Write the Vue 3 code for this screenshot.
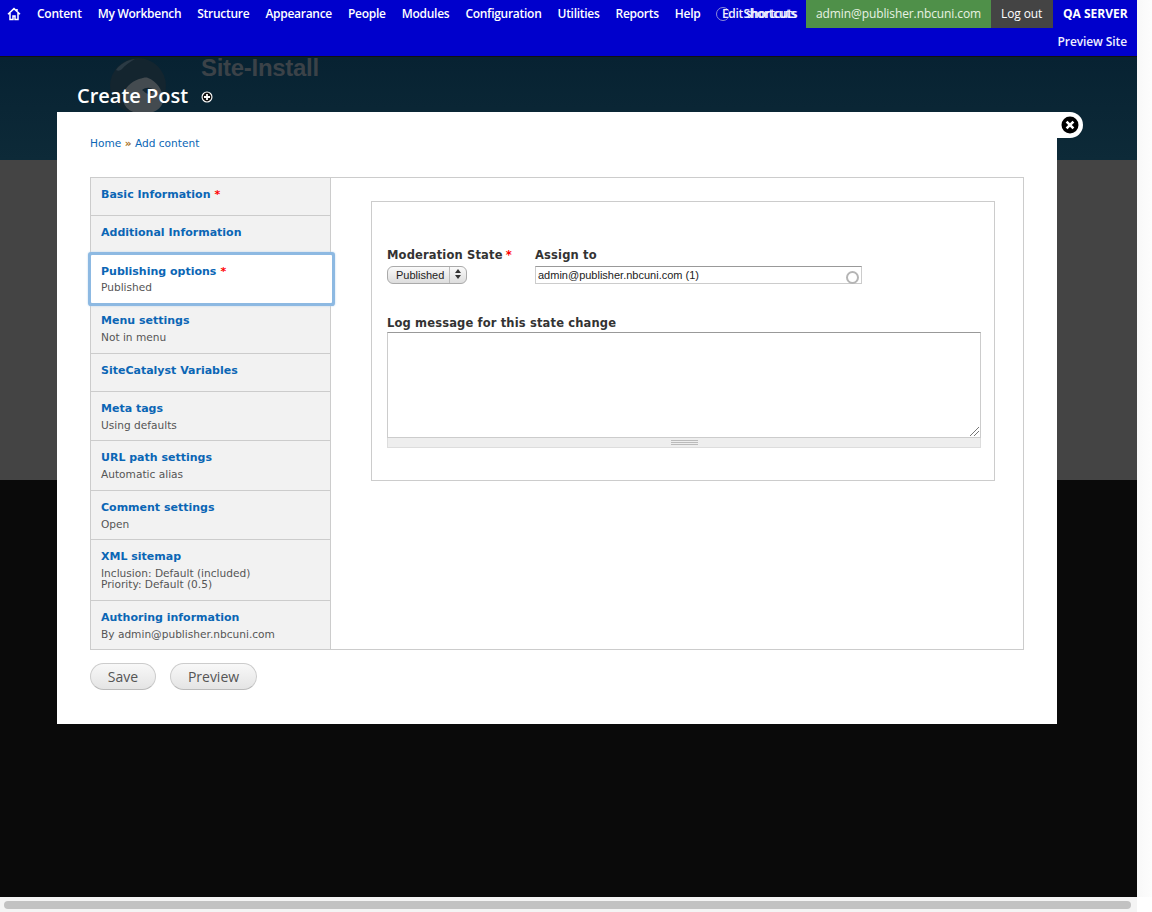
<script setup>
const navItems = ["Content", "My Workbench", "Structure", "Appearance", "People", "Modules", "Configuration", "Utilities", "Reports", "Help"];

const tabs = [
  { title: "Basic Information", required: true },
  { title: "Additional Information" },
  { title: "Publishing options", required: true, summary: ["Published"], active: true },
  { title: "Menu settings", summary: ["Not in menu"] },
  { title: "SiteCatalyst Variables" },
  { title: "Meta tags", summary: ["Using defaults"] },
  { title: "URL path settings", summary: ["Automatic alias"] },
  { title: "Comment settings", summary: ["Open"] },
  { title: "XML sitemap", summary: ["Inclusion: Default (included)", "Priority: Default (0.5)"] },
  { title: "Authoring information", summary: ["By admin@publisher.nbcuni.com"] },
];
</script>

<template>
  <div class="page">
    <header class="toolbar">
      <div class="toolbar-row">
        <a class="home">
          <svg width="14" height="14" viewBox="0 0 14 14">
            <path d="M1 7.2 7 1.6l6 5.6M3 6v6.6h3V9h2v3.6h3V6M10 2v2.4" fill="none" stroke="#fff" stroke-width="1.5" />
          </svg>
        </a>
        <nav class="menu">
          <a v-for="item in navItems" :key="item">{{ item }}</a>
        </nav>
        <div class="shortcuts">
          <span class="shortcut-circle"></span>
          <span class="shortcut-a">Edit shortcuts</span>
          <span class="shortcut-b">Shortcuts</span>
        </div>
        <a class="user">admin@publisher.nbcuni.com</a>
        <a class="logout">Log out</a>
        <strong class="server">QA SERVER</strong>
      </div>
      <div class="toolbar-sub"><a>Preview Site</a></div>
    </header>

    <section class="title-band">
      <div class="site-logo">
        <svg width="58" height="58" viewBox="0 0 58 58">
          <circle cx="29" cy="29" r="28" fill="#14252f" />
          <path d="M7 13C11 7 18 3 26 2c-5 3-10 6-13 10-2 2-4 2-6 1z" fill="#2a3a44" />
          <path d="M30 22c4-1 7-2 9-1 8 3 15 11 15 22 0 9-11 14-20 14S14 52 14 41c0-10 8-16 16-19z" fill="#444b50" />
          <path d="M33 33c4-3 9-3 13 1-3 1-4 3-6 3-3 0-5-3-7-4z" fill="#14252f" />
        </svg>
        <span class="site-name">Site-Install</span>
      </div>
      <h1>
        Create Post
        <svg class="add-icon" width="12" height="12" viewBox="0 0 12 12">
          <circle cx="6" cy="6" r="5.5" fill="#fff" />
          <circle cx="6" cy="6" r="4.4" fill="#111" />
          <path d="M6 3v6M3 6h6" stroke="#fff" stroke-width="1.8" />
        </svg>
      </h1>
    </section>
    <div class="grey-band"></div>
    <div class="dark-band"></div>

    <main class="modal">
      <a class="close">
        <svg width="18" height="18" viewBox="0 0 18 18">
          <circle cx="9" cy="9" r="8.5" fill="#000" />
          <path d="M5.6 5.6l6.8 6.8M12.4 5.6l-6.8 6.8" stroke="#fff" stroke-width="2.6" />
        </svg>
      </a>
      <div class="breadcrumb"><a>Home</a> <span>»</span> <a>Add content</a></div>

      <div class="tabs">
        <ul class="tab-list">
          <li v-for="tab in tabs" :key="tab.title" :class="{ active: tab.active }">
            <a>{{ tab.title }}</a>
            <span v-if="tab.required" class="req">*</span>
            <small v-for="line in tab.summary" :key="line">{{ line }}</small>
          </li>
        </ul>
        <div class="pane">
          <div class="fieldset">
            <div class="field-row">
              <div class="field state-field">
                <label>Moderation State <span class="req">*</span></label>
                <div class="select">
                  <span class="select-value">Published</span>
                  <span class="select-arrows">
                    <svg width="6" height="10" viewBox="0 0 6 10"><path d="M3 0 6 4H0zM3 10 0 6h6z" fill="#333" /></svg>
                  </span>
                </div>
              </div>
              <div class="field">
                <label>Assign to</label>
                <div class="autocomplete">
                  <span>admin@publisher.nbcuni.com (1)</span>
                  <i class="throbber"></i>
                </div>
              </div>
            </div>
            <div class="field log-field">
              <label>Log message for this state change</label>
              <div class="textarea">
                <svg class="resize" width="9" height="9" viewBox="0 0 9 9">
                  <path d="M0 9 9 0M4 9l5-5" stroke="#777" stroke-width="1" />
                </svg>
              </div>
              <div class="grip"><i></i></div>
            </div>
          </div>
        </div>
      </div>

      <div class="actions">
        <button class="save">Save</button>
        <button class="preview">Preview</button>
      </div>
    </main>

    <div class="vtrack"></div>
    <div class="scrollbar"><div class="thumb"></div></div>
  </div>
</template>

<style>
html, body {
  margin: 0;
  height: 912px;
  overflow: hidden;
  background: #fff;
}
</style>

<style scoped>
.page {
  position: relative;
  width: 1152px;
  height: 912px;
  overflow: hidden;
  font-family: "DejaVu Sans", sans-serif;
  background: #fff;
}
.toolbar {
  width: 1137px;
  height: 56px;
  background: #0000cc;
  font-family: "Open Sans", sans-serif;
  font-size: 12px;
  color: #fff;
  border-bottom: 1px solid #111;
}
.toolbar-row {
  display: flex;
  height: 28px;
  align-items: stretch;
  line-height: 27px;
  padding-right: 10px;
  white-space: nowrap;
}
.home {
  width: 37px;
  padding: 7px 0 0 7px;
  box-sizing: border-box;
  line-height: 0;
}
.menu {
  display: flex;
  gap: 16px;
  font-weight: 600;
  letter-spacing: -0.275px;
}
.shortcuts {
  position: relative;
  width: 80px;
  margin-left: auto;
  margin-right: 10px;
  color: #f0f0ff;
  font-weight: 600;
  letter-spacing: -0.35px;
}
.shortcut-circle {
  position: absolute;
  left: 0;
  top: 7px;
  width: 12px;
  height: 12px;
  border: 1px solid #8a8ad8;
  border-radius: 50%;
}
.shortcut-a,
.shortcut-b {
  position: absolute;
  top: 0;
}
.shortcut-a {
  left: 6px;
}
.shortcut-b {
  right: 0;
}
.user {
  background: #4f9049;
  color: #e8f3e4;
  padding: 0 10px;
  width: 165px;
  letter-spacing: -0.1px;
}
.logout {
  background: #444;
  padding: 0 10px;
  width: 42px;
  letter-spacing: -0.1px;
}
.server {
  width: 64px;
  padding-left: 10px;
  font-weight: 700;
}
.toolbar-sub {
  height: 28px;
  line-height: 27px;
  text-align: right;
  padding-right: 10px;
  font-weight: 600;
  letter-spacing: -0.1px;
  color: #f0f0ff;
}
.title-band {
  position: relative;
  width: 1137px;
  height: 103px;
  background: linear-gradient(#072232, #0d2a38);
}
.site-logo {
  display: flex;
  margin-left: 109px;
  gap: 34px;
}
.site-name {
  font-family: "Liberation Sans", sans-serif;
  font-size: 24px;
  font-weight: 700;
  letter-spacing: -0.3px;
  line-height: 22px;
  color: #3b4248;
}
h1 {
  position: absolute;
  left: 77px;
  top: 25px;
  margin: 0;
  font-family: "Open Sans", sans-serif;
  font-size: 20px;
  font-weight: 600;
  line-height: 28px;
  color: #fff;
}
.add-icon {
  margin-left: 8px;
  vertical-align: 0;
}
.grey-band {
  width: 1137px;
  height: 320px;
  background: #444;
}
.dark-band {
  width: 1137px;
  height: 417px;
  background: #0a0a0a;
}
.modal {
  position: absolute;
  left: 57px;
  top: 112px;
  width: 1000px;
  height: 612px;
  box-sizing: border-box;
  padding: 24px 33px 0;
  background: #fff;
}
.close {
  position: absolute;
  right: -26px;
  top: 0;
  width: 26px;
  height: 26px;
  background: #fff;
  border-radius: 0 13px 13px 0;
  line-height: 0;
  padding: 4px 0 0 4px;
  box-sizing: border-box;
}
.breadcrumb {
  font-size: 10.6px;
  line-height: 14px;
  color: #0b66b5;
}
.breadcrumb span {
  color: #a9701c;
  font-weight: 700;
}
.tabs {
  display: flex;
  width: 934px;
  height: 473px;
  margin-top: 27px;
  border: 1px solid #ccc;
  box-sizing: border-box;
}
.tab-list {
  width: 239px;
  margin: 0;
  padding: 0;
  list-style: none;
  background: #f2f2f2;
  border-right: 1px solid #ccc;
  flex-shrink: 0;
}
.tab-list li {
  position: relative;
  box-sizing: border-box;
  padding: 9px 10px 0;
  height: 38px;
  border-bottom: 1px solid #ccc;
  font-size: 11px;
  line-height: 16px;
}
.tab-list li.active {
  height: 48px;
  width: 241px;
  margin: 1px 0 3px;
  background: #fff;
  border: 0;
  border-radius: 1px;
  box-shadow: 0 0 0 3px #8db9e2, 0 0 2px 3px #b5d2ec;
  z-index: 1;
}
.tab-list li:nth-child(4) {
  height: 48px;
  padding-top: 7px;
}
.tab-list li:nth-child(6),
.tab-list li:nth-child(8) {
  height: 49px;
}
.tab-list li:nth-child(7) {
  height: 50px;
}
.tab-list li:nth-child(9) {
  height: 61px;
}
.tab-list li:last-child {
  height: 48px;
  border-bottom: 0;
}
.tab-list a {
  font-weight: 700;
  color: #0b66b5;
}
.tab-list small {
  display: block;
  font-size: 10.6px;
  line-height: 11px;
  color: #555;
  white-space: nowrap;
  padding-top: 3px;
}
.tab-list li.active small {
  padding-top: 2px;
}
.tab-list small + small {
  padding-top: 0;
}
.req {
  color: #f00;
  font-weight: 700;
  margin-left: -1px;
}
.tab-list .req {
  margin-left: 4px;
}
.pane {
  flex: 1;
  padding: 23px 28px 0 40px;
}
.fieldset {
  height: 280px;
  box-sizing: border-box;
  border: 1px solid #ccc;
  padding: 45px 13px 0 15px;
}
.field-row {
  display: flex;
  gap: 24px;
}
.field label {
  display: block;
  font-size: 11.5px;
  font-weight: 700;
  letter-spacing: 0.15px;
  line-height: 16px;
  color: #333;
  white-space: nowrap;
}
.state-field {
  width: 124px;
}
.select {
  display: flex;
  width: 80px;
  height: 18px;
  margin-top: 3px;
  box-sizing: border-box;
  border: 1px solid #aaa;
  border-radius: 6px;
  background: linear-gradient(#fafafa, #ddd);
  font-family: "Liberation Sans", sans-serif;
  font-size: 11px;
  line-height: 16px;
  color: #222;
}
.select-value {
  width: 62px;
  padding-left: 8px;
  box-sizing: border-box;
  border-right: 1px solid #bbb;
}
.select-arrows {
  flex: 1;
  text-align: center;
  line-height: 17px;
}
.autocomplete {
  position: relative;
  width: 327px;
  height: 18px;
  margin-top: 3px;
  box-sizing: border-box;
  border: 1px solid #ccc;
  border-top-color: #999;
  font-family: "Liberation Sans", sans-serif;
  font-size: 11px;
  line-height: 16px;
  padding-left: 2px;
  color: #222;
}
.throbber {
  position: absolute;
  right: 2px;
  top: 4px;
  width: 9px;
  height: 9px;
  border: 2px solid #b5b5b5;
  border-radius: 50%;
}
.log-field {
  margin-top: 31px;
  width: 594px;
}
.textarea {
  position: relative;
  height: 106px;
  box-sizing: border-box;
  margin-top: 1px;
  border: 1px solid #ccc;
  border-top-color: #999;
}
.resize {
  position: absolute;
  right: 1px;
  bottom: 1px;
}
.grip {
  height: 10px;
  background: #eee;
  border: 1px solid #ddd;
  border-top: 0;
  display: flex;
  justify-content: center;
  padding-top: 2px;
  box-sizing: border-box;
}
.grip i {
  width: 27px;
  height: 5px;
  background: linear-gradient(#bbb 20%, #eee 20%, #eee 40%, #bbb 40%, #bbb 60%, #eee 60%, #eee 80%, #bbb 80%);
}
.actions {
  display: flex;
  gap: 14px;
  margin-top: 13px;
}
.actions button {
  height: 27px;
  padding: 0;
  border: 1px solid #ccc;
  border-bottom-color: #bbb;
  border-radius: 14px;
  background: linear-gradient(#f8f8f8, #e4e4e4);
  font-family: "Open Sans", sans-serif;
  font-size: 14px;
  color: #555;
}
.save {
  width: 66px;
}
.preview {
  width: 87px;
}
.vtrack {
  position: absolute;
  right: 0;
  top: 0;
  width: 15px;
  height: 897px;
  background: linear-gradient(90deg, #f8f8f8, #fdfdfd);
}
.scrollbar {
  position: absolute;
  left: 0;
  bottom: 0;
  width: 1137px;
  height: 15px;
  background: #f4f4f4;
  box-sizing: border-box;
  padding: 4px 6px 3px 4px;
}
.thumb {
  height: 8px;
  border-radius: 4px;
  background: #c2c2c2;
}
</style>
